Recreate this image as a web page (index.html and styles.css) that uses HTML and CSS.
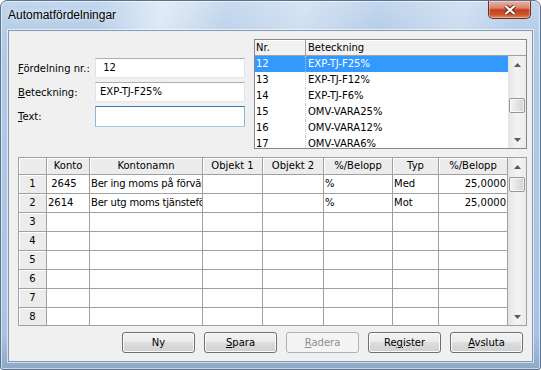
FILE: index.html
```html
<!DOCTYPE html>
<html>
  <head>
    <title>Automatfördelningar</title>
    <link rel="stylesheet" href="styles.css">
  </head>
  <body>
    <div class="window">
      <div class="titlebar">
        <span class="title">Automatfördelningar</span>
        <div class="close">
          <svg width="12" height="10" viewBox="0 0 12 10">
            <path d="M1.5 1 L10.5 9 M10.5 1 L1.5 9" stroke="#5b2218" stroke-width="4" />
            <path d="M1.5 1 L10.5 9 M10.5 1 L1.5 9" stroke="#fff" stroke-width="2.2" />
          </svg>
        </div>
      </div>

      <div class="client">
        <div class="top">
          <div class="form">
            <div class="row">
              <label><u>F</u>ördelning nr.:</label>
              <div class="field">&nbsp;12</div>
            </div>
            <div class="row">
              <label><u>B</u>eteckning:</label>
              <div class="field">EXP-TJ-F25%</div>
            </div>
            <div class="row">
              <label><u>T</u>ext:</label>
              <div class="field focus"></div>
            </div>
          </div>

          <div class="list">
            <div class="list-head">
              <div class="col-nr">Nr.</div>
              <div class="col-bet">Beteckning</div>
            </div>
            <div class="list-body">
              <div class="list-rows">
                <div class="list-row sel"><span class="col-nr">12</span><span class="col-bet">EXP-TJ-F25%</span></div>
                <div class="list-row"><span class="col-nr">13</span><span class="col-bet">EXP-TJ-F12%</span></div>
                <div class="list-row"><span class="col-nr">14</span><span class="col-bet">EXP-TJ-F6%</span></div>
                <div class="list-row"><span class="col-nr">15</span><span class="col-bet">OMV-VARA25%</span></div>
                <div class="list-row"><span class="col-nr">16</span><span class="col-bet">OMV-VARA12%</span></div>
                <div class="list-row"><span class="col-nr">17</span><span class="col-bet">OMV-VARA6%</span></div>
              </div>
              <div class="vscroll list-scroll">
                <div class="arrow"><svg width="7" height="4"><path d="M3.5 0 L7 4 L0 4Z" fill="#5a5a5a" /></svg></div>
                <div class="thumb"></div>
                <div class="arrow down"><svg width="7" height="4"><path d="M0 0 L7 0 L3.5 4Z" fill="#5a5a5a" /></svg></div>
              </div>
            </div>
          </div>
        </div>

        <div class="grid">
          <div class="cells">
            <div class="cell hd"></div>
            <div class="cell hd">Konto</div>
            <div class="cell hd">Kontonamn</div>
            <div class="cell hd">Objekt 1</div>
            <div class="cell hd">Objekt 2</div>
            <div class="cell hd">%/Belopp</div>
            <div class="cell hd">Typ</div>
            <div class="cell hd">%/Belopp</div>

            <div class="cell rn">1</div>
            <div class="cell">&nbsp;2645</div>
            <div class="cell name">Ber ing moms på förvär</div>
            <div class="cell"></div>
            <div class="cell"></div>
            <div class="cell">%</div>
            <div class="cell">Med</div>
            <div class="cell num">25,0000</div>

            <div class="cell rn">2</div>
            <div class="cell">2614</div>
            <div class="cell name">Ber utg moms tjänstefö</div>
            <div class="cell"></div>
            <div class="cell"></div>
            <div class="cell">%</div>
            <div class="cell">Mot</div>
            <div class="cell num">25,0000</div>

            <div class="cell rn">3</div>
            <div class="cell"></div><div class="cell"></div><div class="cell"></div><div class="cell"></div><div class="cell"></div><div class="cell"></div><div class="cell"></div>
            <div class="cell rn">4</div>
            <div class="cell"></div><div class="cell"></div><div class="cell"></div><div class="cell"></div><div class="cell"></div><div class="cell"></div><div class="cell"></div>
            <div class="cell rn">5</div>
            <div class="cell"></div><div class="cell"></div><div class="cell"></div><div class="cell"></div><div class="cell"></div><div class="cell"></div><div class="cell"></div>
            <div class="cell rn">6</div>
            <div class="cell"></div><div class="cell"></div><div class="cell"></div><div class="cell"></div><div class="cell"></div><div class="cell"></div><div class="cell"></div>
            <div class="cell rn">7</div>
            <div class="cell"></div><div class="cell"></div><div class="cell"></div><div class="cell"></div><div class="cell"></div><div class="cell"></div><div class="cell"></div>
            <div class="cell rn">8</div>
            <div class="cell"></div><div class="cell"></div><div class="cell"></div><div class="cell"></div><div class="cell"></div><div class="cell"></div><div class="cell"></div>
          </div>
          <div class="vscroll grid-scroll">
            <div class="arrow"><svg width="7" height="4"><path d="M3.5 0 L7 4 L0 4Z" fill="#5a5a5a" /></svg></div>
            <div class="thumb"></div>
            <div class="arrow down"><svg width="7" height="4"><path d="M0 0 L7 0 L3.5 4Z" fill="#5a5a5a" /></svg></div>
          </div>
        </div>

        <div class="buttons">
          <div class="btn">Ny</div>
          <div class="btn"><u>S</u>para</div>
          <div class="btn disabled"><u>R</u>adera</div>
          <div class="btn">Re<u>g</u>ister</div>
          <div class="btn"><u>A</u>vsluta</div>
        </div>
      </div>
    </div>
  </body>
</html>
```

FILE: styles.css
```css
body {
  margin: 0;
  background: #fff;
  font-family: "DejaVu Sans", sans-serif;
  font-size: 10px;
  color: #000;
}
.window {
  width: 541px;
  height: 370px;
  box-sizing: border-box;
  border: 1px solid #5a7391;
  border-radius: 7px 7px 3px 3px;
  padding: 0 7px 7px;
  display: flex;
  flex-direction: column;
  background:
    linear-gradient(100deg, rgba(255,255,255,0) 18%, rgba(255,255,255,.55) 30%, rgba(255,255,255,.1) 42%, rgba(255,255,255,.35) 56%, rgba(255,255,255,0) 70%, rgba(255,255,255,.3) 85%, rgba(255,255,255,0) 95%) top / 100% 30px no-repeat,
    linear-gradient(#c2d6ed, #b1cae6 12%, #a9c4e3 90%, #8ea9c8);
  box-shadow: inset 0 0 0 1px rgba(255,255,255,.55);
}
.titlebar {
  height: 29px;
  display: flex;
  align-items: flex-start;
}
.title {
  font-family: "Liberation Sans", Arial, sans-serif;
  font-size: 12px;
  line-height: 28px;
  text-shadow: 0 0 5px rgba(255,255,255,.9);
}
.close {
  margin-left: auto;
  margin-right: 2px;
  width: 43px;
  height: 18px;
  box-sizing: border-box;
  border: 1px solid #6b2e25;
  border-top: none;
  border-radius: 0 0 5px 5px;
  background: linear-gradient(#ebb3a5 0%, #dc806a 42%, #c4401f 52%, #cf542c 80%, #e08a5f 100%);
  box-shadow: inset 0 0 0 1px rgba(255,255,255,.35);
  display: flex;
  align-items: center;
  justify-content: center;
}
.client {
  flex: 1;
  background: #f0f0f0;
  border: 1px solid #8399b4;
  padding: 8px 5px 8px 9px;
  display: flex;
  flex-direction: column;
  box-shadow: 0 0 0 1px rgba(255,255,255,.6);
}
.top {
  display: flex;
  height: 110px;
}
.form {
  width: 227px;
  margin-right: 9px;
  padding-top: 19px;
}
.row {
  display: flex;
  align-items: center;
  height: 20px;
  margin-bottom: 4px;
}
.row label {
  width: 77px;
}
.field {
  width: 150px;
  height: 20px;
  box-sizing: border-box;
  border: 1px solid;
  border-color: #abadb3 #e2e3ea #e3e9ef #e2e3ea;
  background: #fff;
  padding-left: 4px;
  line-height: 18px;
}
.field.focus {
  height: 21px;
  border-color: #3d7bad #8fb6d8 #a9c8e4 #8fb6d8;
}
.list {
  flex: 1;
  border: 1px solid #828790;
  background: #fff;
  display: flex;
  flex-direction: column;
  overflow: hidden;
}
.list-head {
  display: flex;
  height: 15px;
  line-height: 15px;
  background: #f2f2f2;
  border-bottom: 1px solid #a0a0a0;
  box-shadow: inset 0 1px #fff;
}
.list-head .col-bet {
  border-left: 1px solid #a0a0a0;
  padding-left: 2px;
}
.col-nr {
  width: 49px;
  padding-left: 1px;
}
.col-bet {
  flex: 1;
  padding-left: 2px;
}
.list-body {
  flex: 1;
  display: flex;
  overflow: hidden;
}
.list-rows {
  flex: 1;
}
.list-row {
  display: flex;
  height: 16px;
  line-height: 16px;
}
.list-row .col-bet {
  border-left: 1px dotted #c8c8c8;
}
.list-row.sel {
  background: #3399ff;
  color: #fff;
}
.vscroll {
  width: 18px;
  display: flex;
  flex-direction: column;
  background: linear-gradient(90deg, #e4e4e4, #f4f4f4 50%, #ececec);
}
.arrow {
  height: 17px;
  display: flex;
  align-items: center;
  justify-content: center;
}
.arrow.down {
  margin-top: auto;
}
.thumb {
  height: 15px;
  margin: 0 1px;
  box-sizing: border-box;
  border: 1px solid #979797;
  border-radius: 2px;
  background: linear-gradient(90deg, #f4f4f4, #e3e3e3 50%, #d2d2d2);
  box-shadow: inset 0 0 0 1px rgba(255,255,255,.7);
}
.list-scroll .thumb {
  margin-top: 25px;
}
.grid-scroll .thumb {
  margin-top: 2px;
}
.grid {
  margin-top: 8px;
  height: 169px;
  box-sizing: border-box;
  border: 1px solid #a0a0a0;
  display: flex;
  background: #fff;
  overflow: hidden;
}
.cells {
  display: grid;
  grid-template-columns: 28px 43px 113px 60px 61px 69px 46px 69px;
  grid-template-rows: 17px;
  grid-auto-rows: 19px;
  width: 489px;
}
.cell {
  box-sizing: border-box;
  border-right: 1px solid #a0a0a0;
  border-bottom: 1px solid #a0a0a0;
  padding: 0 1px;
  white-space: nowrap;
  overflow: hidden;
  line-height: 18px;
}
.cell.name {
  letter-spacing: -0.2px;
}
.cell.hd {
  background: #ececec;
  text-align: center;
  line-height: 16px;
  box-shadow: inset 1px 1px #fff;
}
.cell.rn {
  background: #ececec;
  text-align: center;
  box-shadow: inset 1px 1px #fff;
}
.cell.num {
  text-align: right;
}
.buttons {
  margin-top: 6px;
  margin-right: 4px;
  display: flex;
  justify-content: flex-end;
  gap: 9px;
}
.btn {
  width: 73px;
  height: 21px;
  box-sizing: border-box;
  border: 1px solid #707070;
  border-radius: 3px;
  background: linear-gradient(#f2f2f2 0%, #ebebeb 49%, #dddddd 50%, #cfcfcf 100%);
  box-shadow: inset 0 0 0 1px #fcfcfc;
  text-align: center;
  line-height: 19px;
}
.btn.disabled {
  border-color: #adb2b5;
  background: #f4f4f4;
  color: #8d8d8d;
  box-shadow: none;
}
```
